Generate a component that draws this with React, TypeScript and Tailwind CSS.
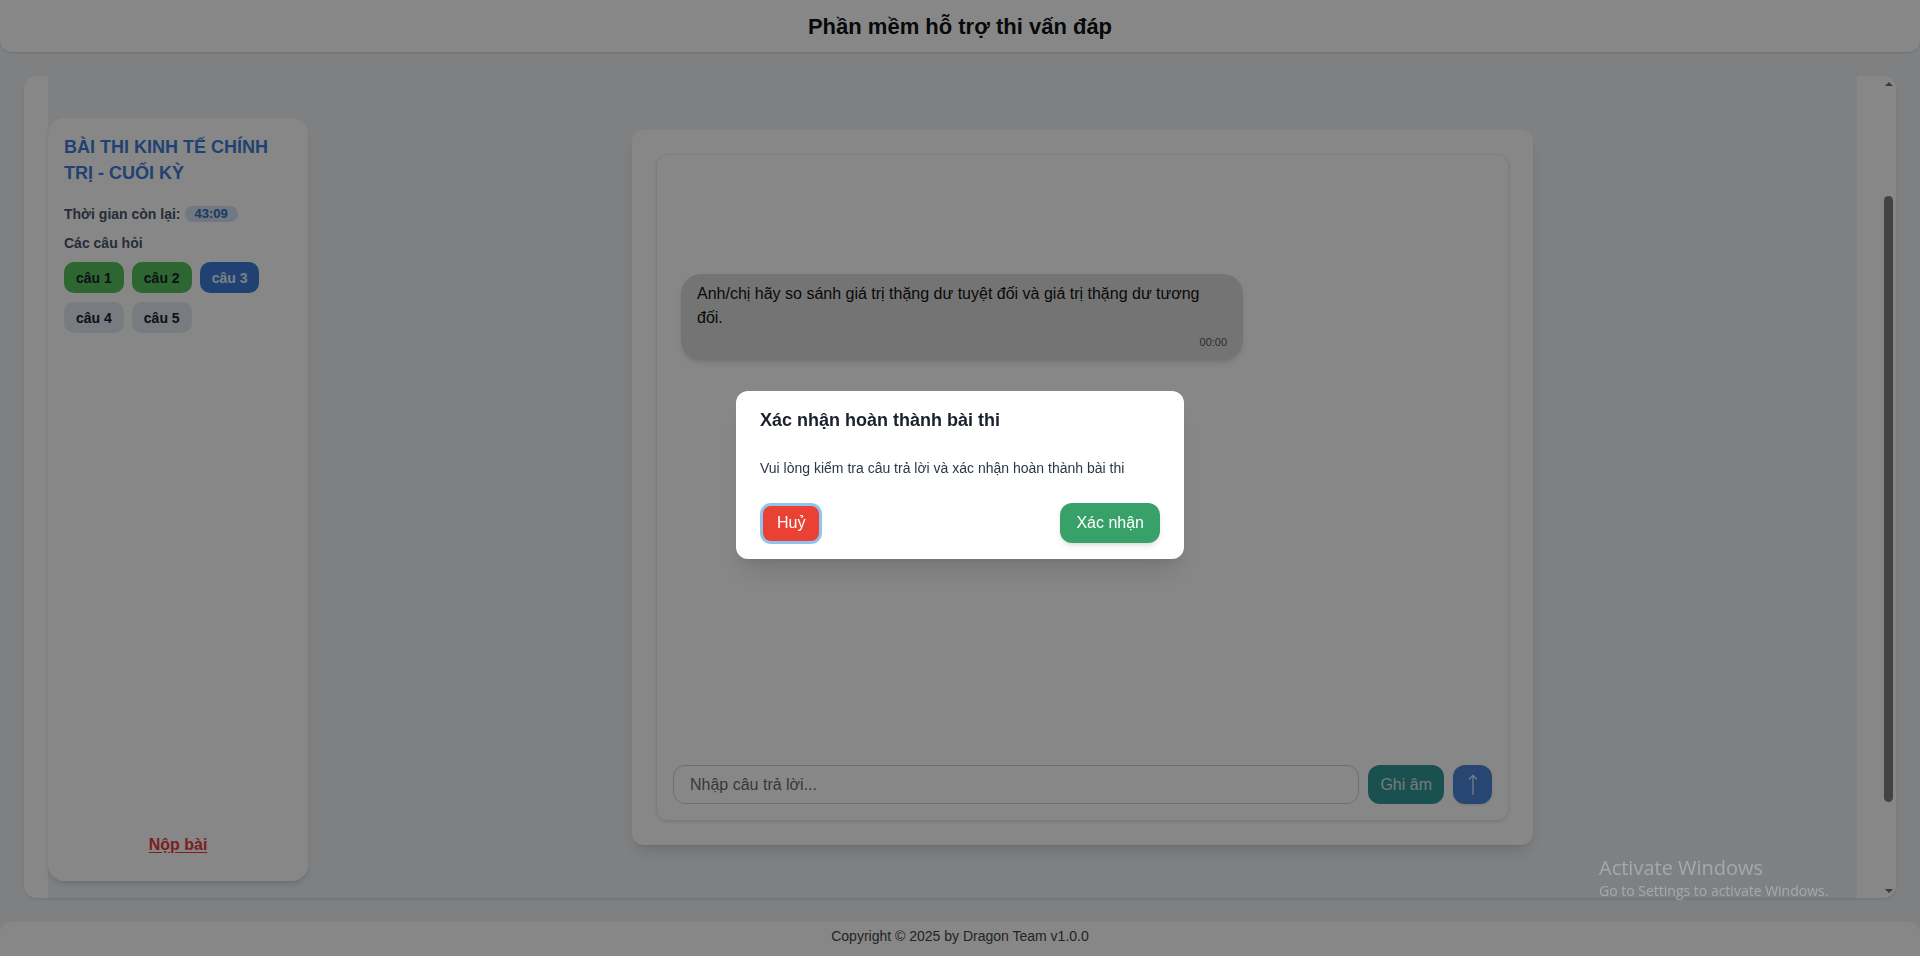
import { useEffect, useRef } from "react"

const questions = [
  { label: "câu 1", state: "done" },
  { label: "câu 2", state: "done" },
  { label: "câu 3", state: "active" },
  { label: "câu 4", state: "todo" },
  { label: "câu 5", state: "todo" },
]

function Sidebar() {
  return (
    <aside className="w-[260px] shrink-0 h-[763px] bg-white rounded-2xl shadow-md px-4 pt-4 pb-6 flex flex-col">
      <h2 className="text-[18px] leading-[26px] font-bold text-[#3b7dd8] uppercase">BÀI THI KINH TẾ CHÍNH TRỊ - CUỐI KỲ</h2>

      <div className="mt-[18px] flex items-center text-sm font-semibold text-[#4a5568]">
        <span>Thời gian còn lại:</span>
        <span className="ml-1 h-4 px-[10px] rounded-full bg-[#d6e2f3] text-[13px] leading-4 font-bold text-[#2f6fc4]">43:09</span>
      </div>

      <div className="mt-[9px] text-sm font-semibold text-[#4a5568]">Các câu hỏi</div>

      <div className="mt-[9px] flex flex-wrap gap-x-2 gap-y-[9px]">
        {questions.map((q) => (
          <button
            key={q.label}
            className={`h-[31px] px-3 rounded-[10px] text-sm font-bold ${
              q.state === "done"
                ? "bg-[#56c05c] text-[#1a202c]"
                : q.state === "active"
                  ? "bg-[#3b7dd8] text-white/90"
                  : "bg-[#e2e8f0] text-[#1a202c]"
            }`}
          >
            {q.label}
          </button>
        ))}
      </div>

      <div className="mt-auto text-center">
        <button className="text-base font-bold text-[#e53e3e] underline underline-offset-2">Nộp bài</button>
      </div>
    </aside>
  )
}

function ChatPanel() {
  return (
    <div className="w-[901px] mx-auto mt-3 h-[715px] bg-white rounded-xl shadow-lg p-6 flex">
      <div className="flex-1 flex flex-col rounded-xl border border-[#ececec] shadow-sm">
        <div className="flex-1 px-6 pt-[119px]">
          <div className="max-w-[70%] bg-[#dcdcdc] rounded-[20px] shadow-md px-4 pt-2 pb-2.5">
            <p className="text-base leading-6 text-[#111]">
              Anh/chị hãy so sánh giá trị thặng dư tuyệt đối và giá trị thặng dư tương đối.
            </p>
            <div className="mt-1 text-right text-[11px] leading-4 text-[#555]">00:00</div>
          </div>
        </div>

        <div className="flex items-center gap-[9px] px-4 pb-4">
          <input
            className="flex-1 h-[39px] rounded-xl border border-[#cfcfcf] px-4 text-base outline-none placeholder:text-[#6b6b6b]"
            placeholder="Nhập câu trả lời..."
          />
          <button className="h-[39px] px-3 rounded-xl bg-[#319795] text-base text-white/80">Ghi âm</button>
          <button className="h-[39px] w-[39px] rounded-xl bg-[#4a86d8] text-white/80 shadow flex items-center justify-center">
            <svg width="10" height="22" viewBox="0 0 10 22" fill="none" stroke="currentColor" strokeWidth="1.3">
              <path d="M5 21V1.5" />
              <path d="M1 5.5L5 1.5L9 5.5" />
            </svg>
          </button>
        </div>
      </div>
    </div>
  )
}

// the browser hides native scrollbars, so draw the one from the capture
function ScrollBar() {
  return (
    <div className="w-[15px] shrink-0 flex flex-col">
      <div className="h-[15px] flex items-center justify-center">
        <div className="w-0 h-0 border-x-4 border-b-4 border-x-transparent border-b-[#6f6f6f]" />
      </div>
      <div className="flex-1">
        <div className="mt-[105px] mx-auto h-[606px] w-[9px] rounded-full bg-[#7f7f7f]" />
      </div>
      <div className="h-[15px] flex items-center justify-center">
        <div className="w-0 h-0 border-x-4 border-t-4 border-x-transparent border-t-[#6f6f6f]" />
      </div>
    </div>
  )
}

export default function App() {
  const scrollRef = useRef<HTMLDivElement>(null)

  // keep the exam area scrolled like the captured state
  useEffect(() => {
    if (scrollRef.current) scrollRef.current.scrollTop = 142
  }, [])

  return (
    <div className="h-screen overflow-hidden flex flex-col gap-6 bg-[#f0f2f5] font-['Liberation_Sans',Arial,sans-serif] text-[#1a202c]">
      <header className="h-[52px] shrink-0 bg-white rounded-b-xl shadow flex items-center justify-center">
        <h1 className="text-[22px] font-bold text-[#111]">Phần mềm hỗ trợ thi vấn đáp</h1>
      </header>

      <main className="flex-1 min-h-0 mx-6 bg-white rounded-xl shadow flex">
        <div ref={scrollRef} className="flex-1 overflow-y-auto px-6 [scrollbar-width:none]">
          <div className="bg-[#f0f2f5] pt-[184px] pb-[127px] flex items-start">
            <Sidebar />
            <div className="flex-1">
              <ChatPanel />
            </div>
          </div>
        </div>
        <ScrollBar />
      </main>

      <footer className="h-[34px] shrink-0 bg-white rounded-t-xl pt-1 text-center text-sm leading-5 text-[#444]">
        Copyright © 2025 by Dragon Team v1.0.0
      </footer>

      <div className="fixed inset-0 bg-black/[0.47] flex items-center justify-center">
        <div className="w-[448px] mb-[6px] bg-white rounded-xl shadow-xl px-6 pt-[15px] pb-4">
          <h3 className="text-lg leading-7 font-bold text-[#1a202c]">Xác nhận hoàn thành bài thi</h3>
          <p className="mt-6 text-sm leading-5 text-[#2d3748]">Vui lòng kiểm tra câu trả lời và xác nhận hoàn thành bài thi</p>
          <div className="mt-[25px] flex items-center justify-between">
            <button className="h-[35px] px-[14px] ml-[3px] rounded-lg bg-[#e94235] text-base font-medium text-white ring-[3px] ring-[#90c4ee]">Huỷ</button>
            <button className="h-10 px-4 rounded-xl bg-[#38a169] text-base font-medium text-white shadow-md">Xác nhận</button>
          </div>
        </div>
      </div>

      <div className="fixed left-[1599px] top-[855px] pointer-events-none text-white/30 font-['Open_Sans',sans-serif]">
        <div className="text-[20px] leading-[26px]">Activate Windows</div>
        <div className="text-sm leading-5">Go to Settings to activate Windows.</div>
      </div>
    </div>
  )
}
